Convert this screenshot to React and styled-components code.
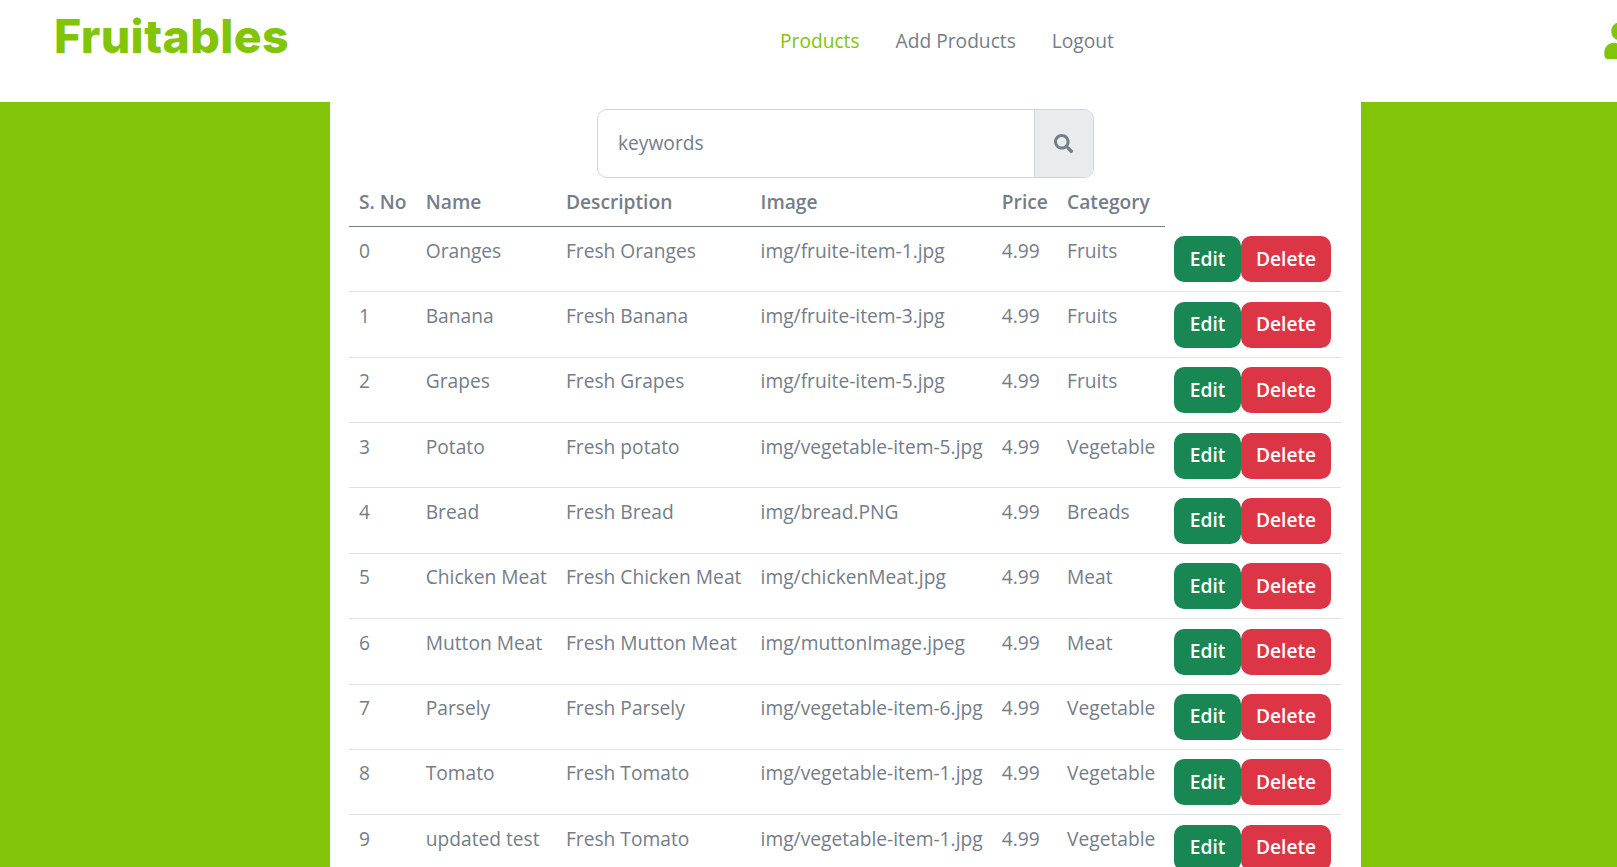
import React from "react";
import styled, { createGlobalStyle } from "styled-components";
import { FaSearch, FaUser } from "react-icons/fa";

const Global = createGlobalStyle`
  html, body { margin: 0; padding: 0; height: 100%; overflow: hidden; background: #81c408; }
  body { font-family: "Open Sans", "Liberation Sans", sans-serif; font-size: 19.2px; color: #747d88; }
`;
const Page = styled.div`
  width: 1617px; height: 867px; overflow: hidden; display: flex; flex-direction: column;
`;
const Nav = styled.header`
  flex: none; height: 102px; background: #fff; display: flex; align-items: flex-start; white-space: nowrap;
`;
const Logo = styled.h1`
  margin: 8px 0 0 54px; width: 726px; flex: none; font-family: Inter, "Open Sans", sans-serif; font-weight: 800;
  font-size: 46.5px; line-height: 56px; letter-spacing: 0.35px; color: #81c408;
`;
const Links = styled.nav`
  display: flex; gap: 36px; margin-top: 27px; width: 822px; flex: none; line-height: 28px;
`;
const NavLink = styled.a`
  color: ${(p) => (p.$active ? "#81c408" : "#747d88")}; font-weight: 400;
`;
const UserIcon = styled.span`
  flex: none; margin-top: 22px; color: #81c408; display: block; line-height: 0;
`;
const Main = styled.main`
  flex: 1; width: 1031px; margin-left: 330px; background: #fff; box-sizing: border-box; padding: 7px 19px 0 20px; min-height: 0;
`;
const Search = styled.div`
  display: flex; width: 497px; height: 69px; margin: 0 auto 0 247px; box-sizing: border-box;
  border: 1px solid #ced4da; border-radius: 10px; overflow: hidden;
`;
const Keyword = styled.div`
  flex: 1; display: flex; align-items: center; padding-left: 20px; line-height: 28.8px;
`;
const SearchBtn = styled.div`
  flex: none; width: 58px; display: flex; align-items: center; justify-content: center; background: #e9ecef;
  border-left: 1px solid #ced4da; font-size: 19.2px; color: #747d88;
`;
const Table = styled.table`
  border-collapse: collapse; margin: 1.3px 0 0 -0.6px;
`;
const Th = styled.th`
  padding: 9px 9.6px; text-align: left; font-weight: 600; line-height: 28.8px; border-bottom: 1px solid #747d88; white-space: nowrap;
`;
const Tr = styled.tr`
  border-bottom: 1px solid #dee2e6; height: 65.35px;
  &:last-child { border-bottom: 0; }
`;
const Td = styled.td`
  padding: 9.6px 9.6px 10px; line-height: 28.8px; vertical-align: top; white-space: nowrap;
`;
const ActionTd = styled(Td)`
  padding: 9.4px 9.6px 0; vertical-align: top;
`;
const Actions = styled.div`
  display: flex;
`;
const Btn = styled.button`
  font: 600 19.2px/28.8px "Open Sans", sans-serif; color: #fff; border: 0; border-radius: 10px; padding: 8.6px 15.3px; height: 46px;
  background: ${(p) => (p.$kind === "edit" ? "#198754" : "#dc3545")};
`;

const rows = [
  ["Oranges", "Fresh Oranges", "img/fruite-item-1.jpg", "Fruits"],
  ["Banana", "Fresh Banana", "img/fruite-item-3.jpg", "Fruits"],
  ["Grapes", "Fresh Grapes", "img/fruite-item-5.jpg", "Fruits"],
  ["Potato", "Fresh potato", "img/vegetable-item-5.jpg", "Vegetable"],
  ["Bread", "Fresh Bread", "img/bread.PNG", "Breads"],
  ["Chicken Meat", "Fresh Chicken Meat", "img/chickenMeat.jpg", "Meat"],
  ["Mutton Meat", "Fresh Mutton Meat", "img/muttonImage.jpeg", "Meat"],
  ["Parsely", "Fresh Parsely", "img/vegetable-item-6.jpg", "Vegetable"],
  ["Tomato", "Fresh Tomato", "img/vegetable-item-1.jpg", "Vegetable"],
  ["updated test", "Fresh Tomato", "img/vegetable-item-1.jpg", "Vegetable"],
];

export default function App() {
  return (
    <Page>
      <Global />
      <Nav>
        <Logo>Fruitables</Logo>
        <Links>
          <NavLink $active>Products</NavLink>
          <NavLink>Add Products</NavLink>
          <NavLink>Logout</NavLink>
        </Links>
        <UserIcon><FaUser size={37} /></UserIcon>
      </Nav>
      <Main>
        <Search>
          <Keyword>keywords</Keyword>
          <SearchBtn><FaSearch /></SearchBtn>
        </Search>
        <Table>
          <thead>
            <tr>
              <Th>S. No</Th><Th>Name</Th><Th>Description</Th><Th>Image</Th><Th>Price</Th><Th>Category</Th>
            </tr>
          </thead>
          <tbody>
            {rows.map((r, i) => (
              <Tr key={i}>
                <Td>{i}</Td><Td>{r[0]}</Td><Td>{r[1]}</Td><Td>{r[2]}</Td><Td>4.99</Td><Td>{r[3]}</Td>
                <ActionTd>
                  <Actions><Btn $kind="edit">Edit</Btn><Btn $kind="delete">Delete</Btn></Actions>
                </ActionTd>
              </Tr>
            ))}
          </tbody>
        </Table>
      </Main>
    </Page>
  );
}
